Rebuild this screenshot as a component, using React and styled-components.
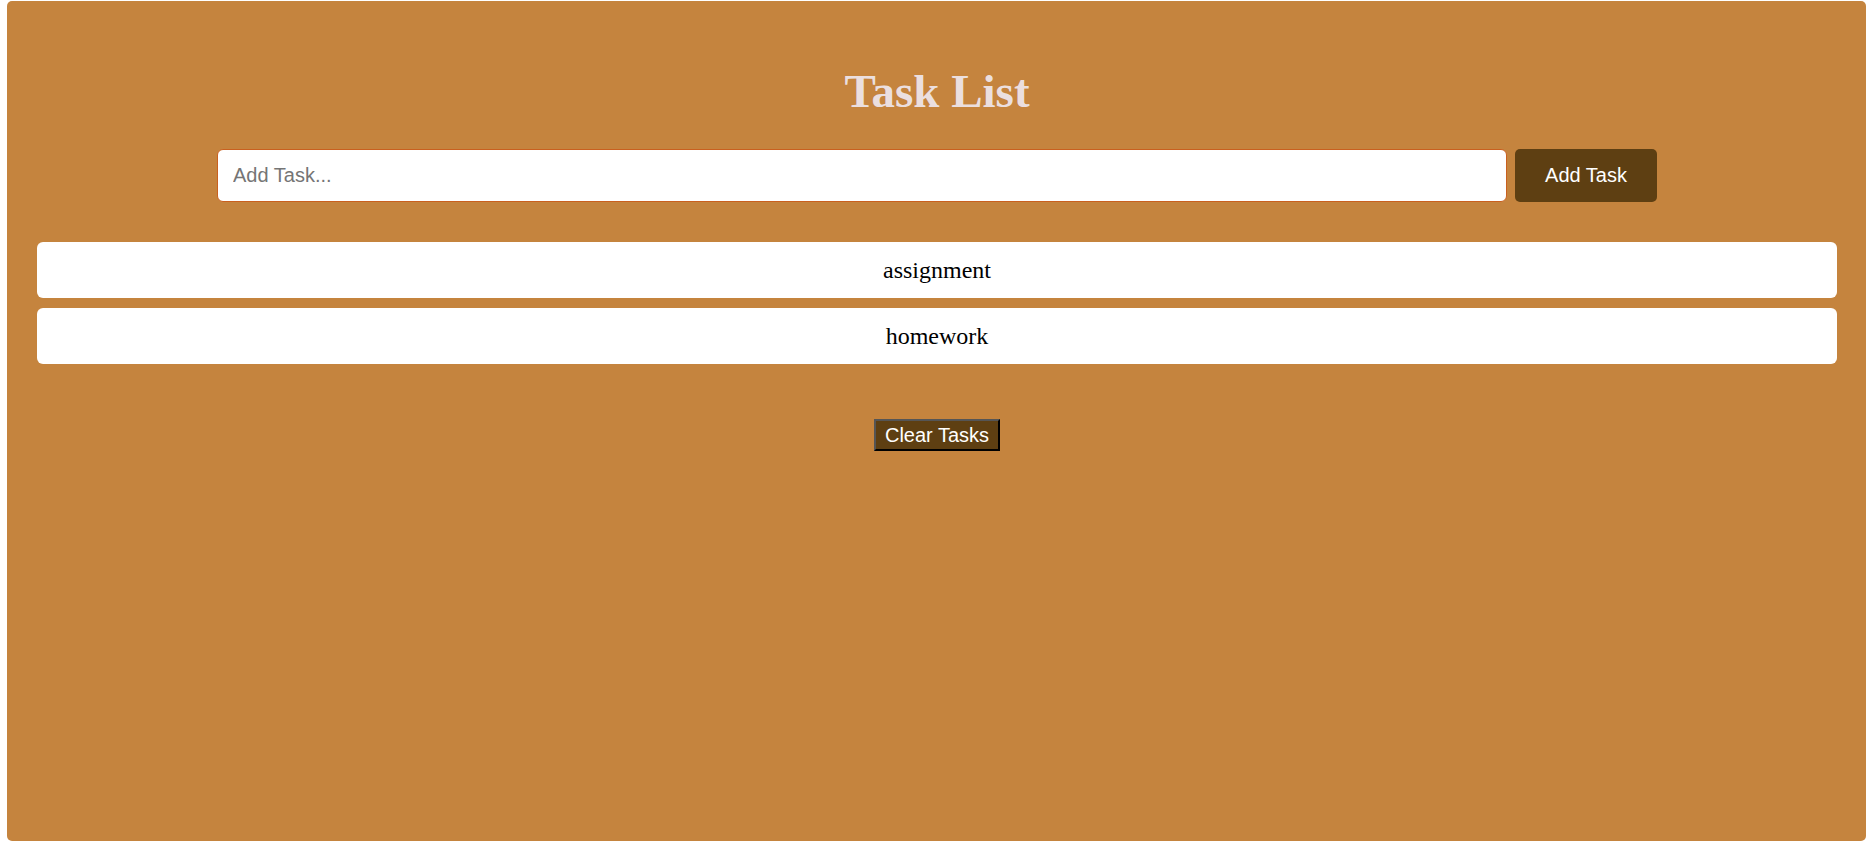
import { useState } from 'react';
import styled, { createGlobalStyle } from 'styled-components';

const GlobalStyle = createGlobalStyle`
    body {
        margin: 0;
        background: #ffffff;
        font-family: "Liberation Serif", "Times New Roman", serif;
    }
`;

const Page = styled.div`
    padding: 1px 10px 6px 7px;
`;

const Board = styled.div`
    box-sizing: border-box;
    height: 840px;
    background: #c5843e;
    border-radius: 5px;
    padding: 63px 29px 30px 30px;
    display: flex;
    flex-direction: column;
    align-items: center;
`;

const Title = styled.h1`
    margin: 0;
    height: 55px;
    line-height: 55px;
    font-size: 47px;
    font-weight: bold;
    color: #ebdfdf;
`;

const Form = styled.form`
    width: 80%;
    display: flex;
    gap: 8px;
    margin-top: 30px;
`;

const TaskInput = styled.input`
    flex: 1;
    box-sizing: border-box;
    height: 53px;
    padding: 0 15px;
    border: 1px solid #c9601f;
    border-radius: 6px;
    outline: none;
    font-family: "Liberation Sans", Arial, sans-serif;
    font-size: 20px;
    background: #ffffff;

    &::placeholder {
        color: #757575;
    }
`;

const AddButton = styled.button`
    width: 142px;
    height: 53px;
    border: none;
    border-radius: 5px;
    background: #5e3f12;
    color: #ffffff;
    font-family: "Liberation Sans", Arial, sans-serif;
    font-size: 20px;
    cursor: pointer;
`;

const List = styled.ul`
    list-style: none;
    align-self: stretch;
    margin: 40px 0 0;
    padding: 0;
    display: flex;
    flex-direction: column;
    gap: 10px;
`;

const Item = styled.li`
    height: 56px;
    display: flex;
    align-items: center;
    justify-content: center;
    background: #ffffff;
    border-radius: 6px;
    font-size: 24px;
    color: #000000;
`;

const ClearButton = styled.button`
    margin-top: 55px;
    height: 32px;
    padding: 0 9px;
    border-width: 2px;
    border-style: solid;
    border-color: #555555 #000000 #000000 #555555;
    background: #5e3f12;
    color: #ffffff;
    font-family: "Liberation Sans", Arial, sans-serif;
    font-size: 20px;
    cursor: pointer;
`;

const App = () => {
    const [tasks, setTasks] = useState(['assignment', 'homework']);
    const [text, setText] = useState('');

    const onSubmit = e => {
        e.preventDefault();
        if (!text.trim()) return;
        setTasks([...tasks, text.trim()]);
        setText('');
    };

    return (
        <Page>
            <GlobalStyle />
            <Board>
                <Title>Task List</Title>
                <Form onSubmit={onSubmit}>
                    <TaskInput
                        placeholder="Add Task..."
                        value={text}
                        onChange={e => setText(e.target.value)}
                    />
                    <AddButton type="submit">Add Task</AddButton>
                </Form>
                <List>
                    {tasks.map((task, i) => (
                        <Item key={i}>{task}</Item>
                    ))}
                </List>
                <ClearButton onClick={() => setTasks([])}>Clear Tasks</ClearButton>
            </Board>
        </Page>
    );
};

export default App;
